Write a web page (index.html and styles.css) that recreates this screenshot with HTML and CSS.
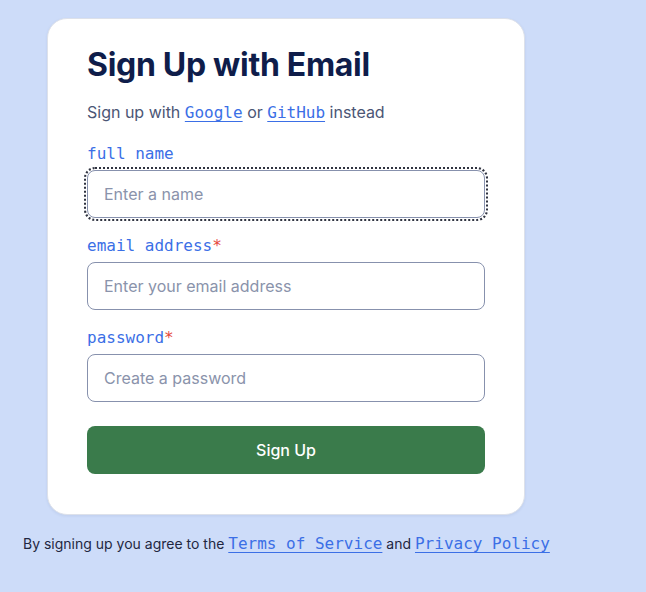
FILE: index.html
```html
<!DOCTYPE html>
<html lang="en">
<head>
<meta charset="utf-8">
<title>Sign Up with Email</title>
<link rel="stylesheet" href="styles.css">
</head>
<body>
<main class="page">
  <section class="card">
    <h1 class="title">Sign Up with Email</h1>
    <p class="subtitle">Sign up with <a href="#" class="mono-link">Google</a> or <a href="#" class="mono-link">GitHub</a> instead</p>
    <form class="form">
      <div class="field">
        <label class="label" for="name">full name</label>
        <input class="input input-focus" id="name" type="text" placeholder="Enter a name">
      </div>
      <div class="field">
        <label class="label" for="email">email address<span class="req">*</span></label>
        <input class="input" id="email" type="email" placeholder="Enter your email address">
      </div>
      <div class="field">
        <label class="label" for="password">password<span class="req">*</span></label>
        <input class="input" id="password" type="password" placeholder="Create a password">
      </div>
      <button class="button" type="button">Sign Up</button>
    </form>
  </section>
  <p class="terms">By signing up you agree to the <a href="#" class="mono-link">Terms of Service</a> and <a href="#" class="mono-link">Privacy Policy</a></p>
</main>
</body>
</html>
```
FILE: styles.css
```css
* { box-sizing: border-box; }
html, body {
  margin: 0;
  padding: 0;
  background: #cddcf9;
  font-family: Inter, "Noto Sans", sans-serif;
}
.page {
  padding: 18px 23px;
  min-height: 592px;
}
.card {
  width: 478px;
  margin-left: 24px;
  background: #ffffff;
  border: 1px solid #dde1ea;
  border-radius: 20px;
  padding: 26px 39px 40px;
  box-shadow: 0 1px 3px rgba(30, 50, 100, 0.08);
}
.title {
  margin: 0;
  font-size: 32px;
  line-height: 40px;
  font-weight: 700;
  color: #0f1d4a;
  letter-spacing: -0.3px;
}
.subtitle {
  margin: 15px 0 0;
  font-size: 16px;
  line-height: 24px;
  color: #4b5675;
}
.mono-link {
  font-family: "DejaVu Sans Mono", "Liberation Mono", monospace;
  color: #3b6fe6;
  text-decoration: underline;
  text-underline-offset: 3px;
  font-size: 16px;
}
.form {
  display: flex;
  flex-direction: column;
  gap: 16px;
  margin-top: 17px;
}
.field {
  display: flex;
  flex-direction: column;
  gap: 4px;
}
.label {
  font-family: "DejaVu Sans Mono", "Liberation Mono", monospace;
  font-size: 16px;
  line-height: 24px;
  color: #3b6fe6;
}
.req { color: #e5483c; }
.input {
  height: 48px;
  width: 100%;
  border: 1px solid #8791ad;
  border-radius: 8px;
  padding: 0 16px;
  font-family: Inter, "Noto Sans", sans-serif;
  font-size: 16px;
  color: #1f2741;
  background: #fff;
}
.input::placeholder { color: #8a93ab; }
.input-focus {
  outline: 2px dotted #2f3340;
  outline-offset: 1px;
}
.button {
  margin-top: 8px;
  height: 48px;
  width: 100%;
  border: none;
  border-radius: 8px;
  background: #3a7b4b;
  color: #ffffff;
  font-family: Inter, "Noto Sans", sans-serif;
  font-size: 16px;
  font-weight: 500;
}
.terms {
  margin: 18px 0 0;
  font-size: 14px;
  line-height: 22px;
  color: #1f2741;
}
```
